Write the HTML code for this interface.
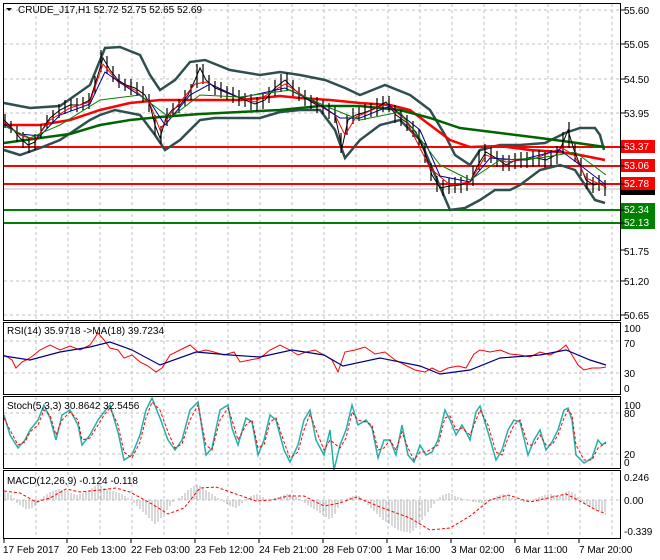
<!DOCTYPE html>
<html><head><meta charset="utf-8"><style>
html,body{margin:0;padding:0;background:#fff;}
svg{display:block;font-family:"Liberation Sans",sans-serif;font-size:10px;}
</style></head><body>
<svg width="660" height="560" viewBox="0 0 660 560" xmlns="http://www.w3.org/2000/svg">
<rect width="660" height="560" fill="#fff"/>
<!-- grid -->
<g stroke="#c0c0c0" stroke-dasharray="3,3" stroke-width="1">
<path d="M36 4V320M68 4V320M100 4V320M132 4V320M164 4V320M196 4V320M228 4V320M260 4V320M292 4V320M324 4V320M356 4V320M388 4V320M420 4V320M452 4V320M484 4V320M516 4V320M548 4V320M580 4V320M612 4V320"/>
<path d="M36 323V394M68 323V394M100 323V394M132 323V394M164 323V394M196 323V394M228 323V394M260 323V394M292 323V394M324 323V394M356 323V394M388 323V394M420 323V394M452 323V394M484 323V394M516 323V394M548 323V394M580 323V394M612 323V394"/>
<path d="M36 397V468M68 397V468M100 397V468M132 397V468M164 397V468M196 397V468M228 397V468M260 397V468M292 397V468M324 397V468M356 397V468M388 397V468M420 397V468M452 397V468M484 397V468M516 397V468M548 397V468M580 397V468M612 397V468"/>
<path d="M36 472V538M68 472V538M100 472V538M132 472V538M164 472V538M196 472V538M228 472V538M260 472V538M292 472V538M324 472V538M356 472V538M388 472V538M420 472V538M452 472V538M484 472V538M516 472V538M548 472V538M580 472V538M612 472V538"/>
<path d="M4 10H620M4 44H620M4 79H620M4 113H620M4 281H620M4 315H620M4 341H620M4 373H620M4 413H620M4 454H620M4 500H620"/>
</g>
<!-- horizontal levels -->
<g stroke-width="2">
<path d="M4 147H620M4 166H620M4 184H620" stroke="#ff0000"/>
<path d="M4 210H620M4 223H620" stroke="#008000"/>
</g>
<path d="M4 189H620" stroke="#c0c0c0"/>
<!-- bollinger -->
<g fill="none" stroke="#2f4f4f" stroke-width="2.5">
<path d="M4 103L30 108L60 106L90 85L105 48L120 47L140 55L150 75L160 90L175 80L190 62L205 60L230 70L260 75L280 72L300 75L325 80L345 88L360 95L385 85L410 95L430 110L445 135L455 155L470 165L480 150L500 145L520 145L545 143L565 133L580 128L595 128L600 135L604 150"/>
<path d="M4 150L20 155L40 148L60 140L75 130L90 120L100 115L115 110L140 115L155 135L165 150L180 140L200 120L215 118L240 118L260 118L280 112L300 110L320 110L335 130L345 158L360 140L380 125L400 120L420 140L435 175L450 210L465 208L480 200L495 190L510 190L520 185L540 170L560 165L575 170L585 185L595 200L605 203"/>
</g>
<!-- MAs -->
<path d="M4 125L40 125L70 120L100 110L130 103L160 100L200 100L240 100L280 96L300 98L330 100L360 103L390 105L410 110L430 125L450 140L470 147L500 146L530 150L560 152L580 155L605 160" fill="none" stroke="#ff0000" stroke-width="2.5"/>
<path d="M4 143L40 138L70 134L100 125L130 120L160 117L200 114L240 112L280 110L320 106L360 106L400 110L430 118L460 128L500 133L540 138L570 142L605 147" fill="none" stroke="#006400" stroke-width="2.5"/>
<!-- price bars -->
<path d="M5 114V128M11 121V133M17 126V142M23 132V148M29 137V153M35 134V150M41 124V138M47 115V129M53 110V122M59 104V118M65 100V114M71 99V111M77 98V112M83 97V111M89 93V109M95 76V94M101 50V72M107 56V74M113 66V82M119 74V88M125 79V91M131 79V95M137 82V96M143 86V102M149 94V112M155 115V135M161 126V144M167 108V126M173 103V117M179 99V113M185 90V106M191 84V100M197 64V88M203 64V84M209 75V91M215 81V95M221 82V98M227 86V100M233 87V103M239 90V106M245 93V107M251 94V110M257 97V111M263 93V109M269 87V103M275 80V96M281 74V92M287 73V91M293 80V96M299 87V101M305 90V106M311 95V109M317 97V113M323 100V114M329 103V119M335 107V123M341 133V153M347 115V135M353 108V124M359 107V121M365 104V120M371 103V117M377 98V116M383 96V112M389 96V112M395 105V123M401 110V126M407 115V131M413 121V137M419 129V147M425 143V163M431 163V181M437 176V192M443 180V196M449 178V194M455 177V193M461 177V193M467 175V191M473 166V186M479 150V170M485 144V162M491 147V163M497 151V167M503 155V171M509 155V171M515 153V169M521 152V168M527 152V168M533 151V167M539 150V166M545 152V168M551 150V166M557 146V164M563 132V154M569 122V148M575 144V162M581 158V176M587 173V189M593 177V193M599 175V191M605 180V196" stroke="#000" stroke-width="1.2"/>
<path d="M4 120L12 128L20 138L28 145L35 142L42 130L50 118L60 110L70 105L80 105L90 100L97 78L103 58L110 70L118 80L126 85L135 88L145 95L150 105L155 125L160 138L166 118L172 110L180 105L188 95L195 80L200 68L206 80L215 88L225 92L235 96L245 100L255 104L265 100L275 88L285 80L295 90L305 98L315 104L325 108L335 115L342 148L348 120L356 115L366 112L376 108L386 102L396 115L406 122L416 132L424 150L432 175L440 188L450 186L460 185L470 182L478 165L486 152L496 158L506 165L516 160L526 160L536 158L546 160L556 155L562 145L568 130L574 150L580 165L586 180L594 185L600 183L606 188" fill="none" stroke="#000" stroke-width="1"/>
<path d="M4 122L20 135L35 140L50 120L70 108L90 102L103 64L118 82L135 90L150 104L160 130L172 112L195 84L206 82L235 96L255 102L285 84L315 103L335 115L345 135L356 117L386 104L406 120L430 168L450 185L470 182L486 155L506 162L536 158L562 148L574 155L586 178L606 187" fill="none" stroke="#ff0000" stroke-width="1"/>
<path d="M4 124L20 134L40 136L60 115L90 104L105 72L125 86L150 102L165 125L190 95L210 84L240 98L285 88L315 102L340 118L360 118L390 106L420 130L440 176L470 182L490 158L520 160L560 150L580 165L606 185" fill="none" stroke="#00008b" stroke-width="1"/>
<path d="M4 126L30 138L60 125L100 100L140 95L170 118L200 95L240 97L290 90L330 108L360 120L400 112L440 165L470 180L500 160L540 158L575 152L606 175" fill="none" stroke="#008000" stroke-width="1"/>
<!-- right price labels -->
<g fill="#000">
<text x="624" y="14">55.60</text><text x="624" y="48">55.05</text><text x="624" y="83">54.50</text><text x="624" y="117">53.95</text>
<text x="624" y="255">51.75</text><text x="624" y="285">51.20</text><text x="624" y="319">50.65</text>
</g>
<rect x="621" y="140" width="34" height="13" fill="#ff0000"/><text x="624" y="150" fill="#fff">53.37</text>
<rect x="621" y="159" width="34" height="13" fill="#ff0000"/><text x="624" y="169" fill="#fff">53.06</text>
<rect x="621" y="186" width="34" height="9" fill="#000"/>
<rect x="621" y="177" width="34" height="13" fill="#ff0000"/><text x="624" y="187" fill="#fff">52.78</text>
<rect x="621" y="203" width="34" height="13" fill="#008000"/><text x="624" y="213" fill="#fff">52.34</text>
<rect x="621" y="216" width="34" height="13" fill="#008000"/><text x="624" y="226" fill="#fff">52.13</text>
<!-- title -->
<path d="M6 8L12 8L9 11Z" fill="#000"/>
<text x="18" y="13" fill="#000">CRUDE_J17,H1  52.72 52.75 52.65 52.69</text>
<!-- RSI -->
<path d="M4 355L12 360L16 368L22 362L30 358L40 350L50 345L60 350L70 346L80 350L90 345L98 333L104 340L110 348L118 350L124 358L132 355L140 362L148 366L156 372L162 368L170 355L180 350L190 345L198 352L206 350L214 352L224 355L234 352L240 362L250 360L260 358L270 350L280 345L290 350L298 355L306 352L315 350L324 355L332 360L338 372L345 352L355 350L365 347L375 354L385 352L395 360L405 365L415 370L425 372L432 368L440 372L448 368L458 366L466 368L474 354L480 350L490 352L500 350L510 354L520 355L530 357L540 352L550 355L560 350L566 345L572 355L578 365L584 370L592 368L600 368L606 367" fill="none" stroke="#ff0000"/>
<path d="M4 356L30 360L60 352L90 347L110 342L132 350L160 365L196 352L230 355L260 357L292 350L324 355L343 366L380 358L420 366L440 374L470 370L500 358L540 355L566 350L590 360L606 365" fill="none" stroke="#000080" stroke-width="1.2"/>
<text x="7" y="334" fill="#000">RSI(14) 35.9718  -&gt;MA(18) 39.7234</text>
<g fill="#000"><text x="624" y="332">100</text><text x="624" y="347">70</text><text x="624" y="377">30</text><text x="624" y="392">0</text></g>
<!-- Stoch -->
<path d="M4 415L10 435L18 448L25 440L30 430L38 420L44 405L50 418L56 440L62 415L70 410L78 425L82 445L90 435L98 420L104 412L110 405L118 432L124 460L132 455L140 435L146 410L152 398L160 418L168 440L175 450L182 440L190 410L198 402L206 455L212 448L220 410L228 405L232 428L238 445L246 418L252 422L258 455L264 440L270 415L276 420L284 450L290 462L298 445L304 420L310 410L316 440L324 455L330 430L334 470L340 445L346 430L352 405L358 425L366 420L372 428L378 458L384 440L390 440L396 455L402 425L408 455L414 462L420 445L426 455L432 452L438 440L445 410L450 420L456 435L462 425L466 432L470 440L476 412L480 406L488 432L496 460L502 450L508 430L514 420L520 422L528 455L534 440L540 430L546 450L552 442L558 430L564 410L568 408L572 420L576 455L584 463L592 458L598 440L602 445L606 442" fill="none" stroke="#20b2aa" stroke-width="1.5"/>
<path d="M4 418L10 430L18 445L25 442L30 432L38 425L44 410L50 415L56 435L62 420L70 412L78 420L82 440L90 438L98 425L104 415L110 408L118 425L124 452L132 458L140 442L146 418L152 402L160 410L168 432L175 448L182 444L190 420L198 405L206 445L212 450L220 420L228 408L232 420L238 440L246 425L252 420L258 448L264 445L270 422L276 418L284 442L290 458L298 452L304 430L310 414L316 430L324 450L330 440L340 448L346 438L352 412L358 420L366 422L372 425L378 450L384 448L390 440L396 450L402 432L408 448L414 460L420 452L426 452L438 445L445 418L450 416L456 430L462 428L470 435L476 420L480 410L488 425L496 452L502 455L508 438L514 425L520 420L528 445L534 445L540 435L546 445L552 445L558 435L564 418L568 410L572 415L576 445L584 460L592 460L598 448L606 443" fill="none" stroke="#ff0000" stroke-dasharray="3,2"/>
<text x="7" y="409" fill="#000">Stoch(5,3,3) 30.8642 32.5456</text>
<g fill="#000"><text x="624" y="409">100</text><text x="624" y="417">80</text><text x="624" y="458">20</text><text x="624" y="466">0</text></g>
<!-- MACD histogram -->
<g stroke="#b0b0b0" stroke-width="1">
<path d="M5 500V492M8 500V493M11 500V495M14 500V498M17 500V503M20 500V505M23 500V507M26 500V509M29 500V509M32 500V508M35 500V506M38 500V503M41 500V499M44 500V496M47 500V494M50 500V492M53 500V491M56 500V490M59 500V489M62 500V490M65 500V491M68 500V492M71 500V493M74 500V494M77 500V495M80 500V494M83 500V493M86 500V492M89 500V490M92 500V488M95 500V486M98 500V484M101 500V486M104 500V488M107 500V489M110 500V490M113 500V491M116 500V492M119 500V493M122 500V494M125 500V496M128 500V498M131 500V500"/>
<path d="M134 500V503M137 500V506M140 500V509M143 500V512M146 500V515M149 500V518M152 500V521M155 500V524M158 500V522M161 500V518M164 500V514M167 500V510M170 500V506M173 500V502M176 500V500M179 500V498M182 500V496M185 500V493M188 500V490M191 500V488M194 500V486M197 500V485M200 500V486M203 500V488M206 500V490M209 500V492M212 500V494M215 500V496M218 500V498M221 500V500M224 500V502M227 500V504M230 500V506M233 500V507M236 500V508M239 500V506M242 500V503M245 500V500M248 500V498M251 500V496M254 500V495M257 500V494M260 500V495M263 500V497M266 500V499M269 500V500M272 500V499M275 500V498M278 500V497M281 500V496M284 500V495M287 500V494M290 500V494M293 500V495M296 500V497M299 500V499"/>
<path d="M302 500V501M305 500V503M308 500V505M311 500V507M314 500V509M317 500V511M320 500V513M323 500V515M326 500V517M329 500V519M332 500V518M335 500V514M338 500V508M341 500V503M344 500V500M347 500V498M350 500V497M353 500V496M356 500V495M359 500V496M362 500V499M365 500V502M368 500V505M371 500V508M374 500V511M377 500V514M380 500V517M383 500V520M386 500V522M389 500V524M392 500V526M395 500V528M398 500V530M401 500V531M404 500V532M407 500V532M410 500V533M413 500V531M416 500V528M419 500V524M422 500V520M425 500V516M428 500V512M431 500V508M434 500V504M437 500V500M440 500V497M443 500V495M446 500V494M449 500V493M452 500V494M455 500V496M458 500V497M461 500V498M464 500V499M467 500V500M470 500V501M473 500V502M476 500V502M479 500V503M482 500V503M485 500V502M488 500V501M491 500V499M494 500V498M497 500V496M500 500V495M503 500V494M506 500V495M509 500V496M512 500V498M515 500V499M518 500V500"/>
<path d="M521 500V501M524 500V502M527 500V502M530 500V501M533 500V500M536 500V498M539 500V497M542 500V496M545 500V495M548 500V494M551 500V494M554 500V495M557 500V496M560 500V496M563 500V494M566 500V492M569 500V491M572 500V492M575 500V494M578 500V497M581 500V500M584 500V503M587 500V505M590 500V507M593 500V508M596 500V510M599 500V511M602 500V512M605 500V512"/>
</g>
<path d="M4 491L20 493L36 502L50 498L66 489L80 492L100 490L116 488L130 492L152 504L168 514L184 508L200 488L216 487L236 494L256 501L272 500L288 496L304 496L324 506L340 503L356 497L380 507L410 518L430 530L450 528L470 516L490 500L508 495L530 502L548 498L566 494L578 500L596 510L606 514" fill="none" stroke="#ff0000" stroke-dasharray="3,2"/>
<text x="7" y="484" fill="#000">MACD(12,26,9) -0.124 -0.118</text>
<g fill="#000"><text x="624" y="481">0.246</text><text x="624" y="504">0.00</text><text x="624" y="535">-0.339</text></g>
<!-- panel borders -->
<g fill="none" stroke="#000" stroke-width="1">
<rect x="3.5" y="3.5" width="617" height="317"/>
<rect x="3.5" y="322.5" width="617" height="72"/>
<rect x="3.5" y="396.5" width="617" height="72"/>
<rect x="3.5" y="470.5" width="617" height="68"/>
</g>
<g stroke="#000"><path d="M621 10h4M621 44h4M621 79h4M621 113h4M621 147h4M621 166h4M621 184h4M621 210h4M621 223h4M621 250h4M621 281h4M621 315h4"/>
<path d="M4 539v4M67 539v4M131 539v4M195 539v4M259 539v4M323 539v4M387 539v4M451 539v4M515 539v4M579 539v4"/></g>
<g fill="#000">
<text x="3" y="553">17 Feb 2017</text><text x="67" y="553">20 Feb 13:00</text><text x="131" y="553">22 Feb 03:00</text><text x="195" y="553">23 Feb 12:00</text><text x="259" y="553">24 Feb 21:00</text><text x="323" y="553">28 Feb 07:00</text><text x="387" y="553">1 Mar 16:00</text><text x="451" y="553">3 Mar 02:00</text><text x="515" y="553">6 Mar 11:00</text><text x="579" y="553">7 Mar 20:00</text>
</g>
</svg>
</body></html>
